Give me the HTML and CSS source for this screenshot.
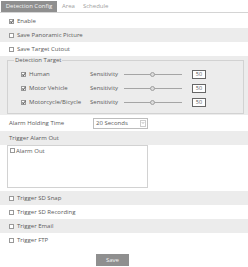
FILE: index.html
```html
<!DOCTYPE html>
<html>
<head>
<meta charset="utf-8">
<link rel="stylesheet" href="styles.css">
</head>
<body>
<div class="page">
  <div class="tabs">
    <span class="tab active">Detection Config</span>
    <span class="tab">Area</span>
    <span class="tab">Schedule</span>
  </div>
  <div class="row"><span class="cb on"></span>Enable</div>
  <div class="row g"><span class="cb"></span>Save Panoramic Picture</div>
  <div class="row"><span class="cb"></span>Save Target Cutout</div>
  <div class="sec">
    <fieldset class="fs">
      <legend>Detection Target</legend>
      <div class="trow">
        <span class="tlabel"><span class="cb on"></span>Human</span>
        <span class="sens">Sensitivity</span>
        <span class="slider"><span class="thumb"></span></span>
        <span class="val">50</span>
      </div>
      <div class="trow">
        <span class="tlabel"><span class="cb on"></span>Motor Vehicle</span>
        <span class="sens">Sensitivity</span>
        <span class="slider"><span class="thumb"></span></span>
        <span class="val">50</span>
      </div>
      <div class="trow">
        <span class="tlabel"><span class="cb on"></span>Motorcycle/Bicycle</span>
        <span class="sens">Sensitivity</span>
        <span class="slider"><span class="thumb"></span></span>
        <span class="val">50</span>
      </div>
    </fieldset>
  </div>
  <div class="row hold">
    <span class="hlabel">Alarm Holding Time</span>
    <span class="select"><span class="stext">20 Seconds</span><span class="sarrow"><svg width="5" height="4" viewBox="0 0 5 4"><path d="M1 1 L2.5 2.5 L4 1" fill="none" stroke="#888" stroke-width="0.8"/></svg></span></span>
  </div>
  <div class="row g">Trigger Alarm Out</div>
  <div class="outwrap">
    <div class="outbox"><span class="cb small"></span>Alarm Out</div>
  </div>
  <div class="row g"><span class="cb"></span>Trigger SD Snap</div>
  <div class="row"><span class="cb"></span>Trigger SD Recording</div>
  <div class="row g"><span class="cb"></span>Trigger Email</div>
  <div class="row"><span class="cb"></span>Trigger FTP</div>
  <div class="btnrow"><span class="btn">Save</span></div>
</div>
</body>
</html>
```
FILE: styles.css
```css
html, body {
  margin: 0;
  padding: 0;
  background: #fff;
}
.page {
  width: 248px;
  height: 267px;
  font-family: "Open Sans", "Noto Sans", sans-serif;
  font-size: 6px;
  color: #5a5a5a;
  overflow: hidden;
}
.tabs {
  display: flex;
  align-items: flex-end;
  height: 12px;
  padding-left: 1px;
  border-bottom: 1px solid #d4d4d4;
  margin-bottom: 1px;
}
.tab {
  height: 11px;
  line-height: 11px;
  padding: 0 4px;
  color: #a0a0a0;
}
.tab.active {
  background: #8f8f8f;
  color: #f4f4f4;
  width: 56px;
  box-sizing: border-box;
  text-align: center;
  padding: 0;
  margin-right: 1px;
}
.row {
  height: 14px;
  display: flex;
  align-items: center;
  padding-left: 9px;
}
.row.g {
  background: #ececec;
}
.cb {
  display: inline-block;
  position: relative;
  width: 5px;
  height: 5px;
  box-sizing: border-box;
  border: 1px solid #999;
  background: #fff;
  margin-right: 3px;
  flex: none;
}
.cb.on::after {
  content: "";
  position: absolute;
  left: 1px;
  top: -1px;
  width: 1px;
  height: 3px;
  border: solid #666;
  border-width: 0 0.8px 0.8px 0;
  transform: rotate(40deg);
}
.cb.small {
  margin-right: 1px;
}
.sec {
  background: #ececec;
  height: 59px;
  padding: 0 4px 0 7px;
  box-sizing: border-box;
}
.fs {
  margin: 0;
  border: 1px solid #d2d2d2;
  padding: 3px 0 0 13px;
  height: 58px;
  box-sizing: border-box;
}
.fs legend {
  padding: 0 1px;
  margin-left: -7px;
  line-height: 8px;
  color: #5a5a5a;
}
.trow {
  display: flex;
  align-items: center;
  height: 14px;
}
.tlabel {
  display: flex;
  align-items: center;
  width: 69px;
  flex: none;
}
.sens {
  width: 34px;
  flex: none;
}
.slider {
  position: relative;
  width: 58px;
  height: 1px;
  background: #a5a5a5;
  flex: none;
}
.thumb {
  position: absolute;
  left: 26px;
  top: -2px;
  width: 5px;
  height: 5px;
  box-sizing: border-box;
  border-radius: 50%;
  background: #dcdcdc;
  border: 1px solid #a0a0a0;
}
.val {
  margin-left: 10px;
  width: 14px;
  height: 9px;
  box-sizing: border-box;
  border: 1px solid #666;
  background: #fff;
  font-size: 5.5px;
  line-height: 7px;
  text-align: center;
}
.row.hold {
  height: 16px;
}
.hlabel {
  width: 84px;
  flex: none;
}
.select {
  display: flex;
  align-items: center;
  width: 55px;
  height: 11px;
  box-sizing: border-box;
  border: 1px solid #bdbdbd;
  background: #fff;
}
.stext {
  flex: 1;
  padding-left: 2px;
}
.sarrow {
  width: 6px;
  height: 7px;
  margin-right: 1px;
  border: 1px solid #cdcdcd;
  box-sizing: border-box;
  display: flex;
  align-items: center;
  justify-content: center;
}
.outwrap {
  height: 46px;
  padding: 0 0 0 7px;
}
.outbox {
  width: 141px;
  height: 43px;
  box-sizing: border-box;
  border: 1px solid #d2d2d2;
  display: flex;
  align-items: flex-start;
  padding: 2px 0 0 2px;
  line-height: 6px;
}
.btnrow {
  display: flex;
  padding: 7px 0 0 96px;
}
.btn {
  width: 33px;
  height: 12px;
  line-height: 12px;
  text-align: center;
  background: #8f8f8f;
  color: #f4f4f4;
}
```
